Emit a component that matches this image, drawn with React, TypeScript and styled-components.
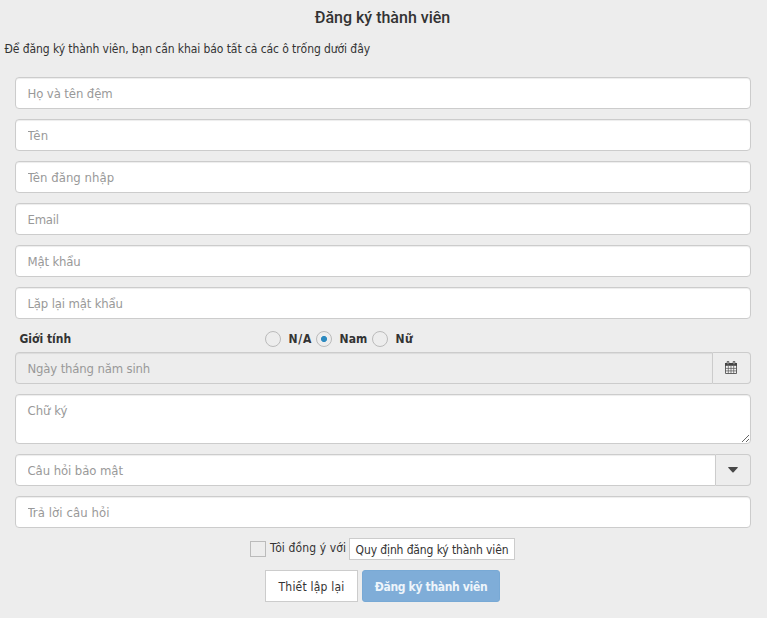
import React, { useState } from "react";
import styled, { createGlobalStyle, css } from "styled-components";

const GlobalStyle = createGlobalStyle`
  * { box-sizing: border-box; }
  html, body { margin: 0; padding: 0; background: #ededed; }
  body, input, textarea, button {
    font-family: Tahoma, "DejaVu Sans Condensed", "Noto Sans", sans-serif;
    font-size: 12px;
    color: #333;
  }
`;

const Page = styled.main`
  width: 767px;
  height: 618px;
  overflow: hidden;
  background: #ededed;
`;

const Title = styled.h2`
  margin: 0;
  padding: 8px 2px 0 0;
  font: 500 16px/20px Roboto, sans-serif;
  text-align: center;
  color: #333;
`;

const Intro = styled.p`
  margin: 11px 0 0 4.5px;
  line-height: 20px;
  white-space: nowrap;
  letter-spacing: -0.08px;
`;

const Form = styled.form`
  display: flex;
  flex-direction: column;
  gap: 10px;
  width: 736px;
  margin: 18px 0 0 15px;
`;

const fieldStyle = css<{ $spacing?: number }>`
  display: block;
  border: 1px solid #ccc;
  border-radius: 4px;
  background: #fff;
  padding: 5px 12px 5px 11.5px;
  font-size: 13px;
  line-height: 20px;
  letter-spacing: ${(p) => p.$spacing ?? 0}px;
  outline: none;
  box-shadow: inset 0 1px 1px rgba(0, 0, 0, 0.075);
  &::placeholder {
    color: #999;
    opacity: 1;
  }
`;

const Field = styled.input<{ $spacing?: number }>`
  ${fieldStyle}
  width: 100%;
  height: 32px;
`;

const Signature = styled.textarea`
  ${fieldStyle}
  width: 100%;
  height: 50px;
  padding-top: 6px;
  resize: vertical;
`;

const FieldGroup = styled.div`
  display: flex;
`;

const GroupField = styled(Field)`
  flex: 1;
  min-width: 0;
  border-radius: 4px 0 0 4px;
  &[readonly] {
    background: #ededed;
  }
`;

const Addon = styled.button<{ $width: number }>`
  width: ${(p) => p.$width}px;
  height: 32px;
  padding: 0 1px 1px 0;
  display: flex;
  align-items: center;
  justify-content: center;
  border: 1px solid #ccc;
  border-left: 0;
  border-radius: 0 4px 4px 0;
  background: #ededed;
`;

const GenderRow = styled.div`
  display: flex;
  align-items: center;
  height: 23px;
  margin: -2px 0 -8px;
  padding-left: 4.5px;
  font-weight: 700;
`;

const GenderLabel = styled.span`
  width: 245.5px;
  line-height: 20px;
`;

const RadioLabel = styled.label<{ $width: number; $spacing: number }>`
  display: flex;
  align-items: center;
  gap: 7.5px;
  width: ${(p) => p.$width}px;
  line-height: 20px;
  letter-spacing: ${(p) => p.$spacing}px;
  white-space: nowrap;
`;

const Radio = styled.input`
  appearance: none;
  flex: none;
  width: 16px;
  height: 16px;
  margin: 0;
  border: 1px solid #bbb;
  border-radius: 50%;
  background: #ededed;
  &:checked {
    background: radial-gradient(circle, #2d8ac0 0 2.7px, #ededed 3.4px);
  }
`;

const Agreement = styled.div`
  display: flex;
  height: 22px;
  padding-left: 235px;
`;

const Check = styled.input`
  appearance: none;
  width: 16px;
  height: 16px;
  margin: 3px 4px 0 0;
  border: 1px solid #bbb;
  background: #ededed;
`;

const AgreeText = styled.label`
  width: 79px;
  line-height: 20px;
  letter-spacing: 0.12px;
  white-space: nowrap;
`;

const PlainButton = styled.button<{ $width: number; $height: number; $spacing: number }>`
  width: ${(p) => p.$width}px;
  height: ${(p) => p.$height}px;
  padding: 1px 0 0;
  border: 1px solid #ccc;
  background: #fff;
  line-height: 20px;
  letter-spacing: ${(p) => p.$spacing}px;
  text-align: center;
  white-space: nowrap;
`;

const Actions = styled.div`
  display: flex;
  gap: 4px;
  padding-left: 250px;
`;

const SubmitButton = styled(PlainButton)`
  border-color: #78a9d5;
  border-radius: 3px;
  background: #7fadd8;
  color: #eef5fb;
  font-weight: 700;
`;

const CalendarIcon = () => (
  <svg width="12" height="13" viewBox="0 0 12 13">
    <path d="M.5 2.5h11v10H.5z" fill="#f4f4f4" stroke="#555" strokeWidth=".9" />
    <path d="M.5 7.4h11M.5 9.9h11M3.3 5v7.5M6 5v7.5M8.7 5v7.5" fill="none" stroke="#555" strokeWidth=".7" />
    <path d="M0 2h12v2.8H0z" fill="#444" />
    <path d="M2.2.5h1.6v2.8H2.2zM8.2.5h1.6v2.8H8.2z" fill="#ededed" stroke="#444" strokeWidth=".8" />
  </svg>
);

const CaretIcon = () => (
  <svg width="10" height="6" viewBox="0 0 10 6">
    <path d="M.3 0h9.4v.8L5.6 5.2q-.6.6-1.2 0L.3.8z" fill="#484848" />
  </svg>
);

const fields = [
  { label: "Họ và tên đệm", type: "text", spacing: -0.1 },
  { label: "Tên", type: "text", spacing: 0.4 },
  { label: "Tên đăng nhập", type: "text", spacing: 0.03 },
  { label: "Email", type: "email", spacing: -0.25 },
  { label: "Mật khẩu", type: "password", spacing: -0.15 },
  { label: "Lặp lại mật khẩu", type: "password", spacing: -0.16 },
];

const genders = [
  { label: "N/A", width: 51, spacing: 0.7 },
  { label: "Nam", width: 56, spacing: 0.1 },
  { label: "Nữ", width: 45, spacing: 0.4 },
];

export default function App() {
  const [gender, setGender] = useState("Nam");
  return (
    <>
      <GlobalStyle />
      <Page>
        <Title>Đăng ký thành viên</Title>
        <Intro>Để đăng ký thành viên, bạn cần khai báo tất cả các ô trống dưới đây</Intro>
        <Form onSubmit={(e) => e.preventDefault()}>
          {fields.map((f) => (
            <Field key={f.label} type={f.type} placeholder={f.label} $spacing={f.spacing} />
          ))}
          <GenderRow>
            <GenderLabel>Giới tính</GenderLabel>
            {genders.map((g) => (
              <RadioLabel key={g.label} $width={g.width} $spacing={g.spacing}>
                <Radio type="radio" name="gender" checked={gender === g.label} onChange={() => setGender(g.label)} />
                {g.label}
              </RadioLabel>
            ))}
          </GenderRow>
          <FieldGroup>
            <GroupField placeholder="Ngày tháng năm sinh" readOnly $spacing={-0.16} />
            <Addon type="button" $width={38} aria-label="Ngày tháng năm sinh"><CalendarIcon /></Addon>
          </FieldGroup>
          <Signature placeholder="Chữ ký" />
          <FieldGroup>
            <GroupField placeholder="Câu hỏi bảo mật" $spacing={-0.08} />
            <Addon type="button" $width={35} aria-label="Câu hỏi bảo mật"><CaretIcon /></Addon>
          </FieldGroup>
          <Field placeholder="Trả lời câu hỏi" $spacing={0.08} />
          <Agreement>
            <Check type="checkbox" id="agree" />
            <AgreeText htmlFor="agree">Tôi đồng ý với</AgreeText>
            <PlainButton type="button" $width={166} $height={22} $spacing={-0.12}>Quy định đăng ký thành viên</PlainButton>
          </Agreement>
          <Actions>
            <PlainButton type="reset" $width={93} $height={32} $spacing={0.2}>Thiết lập lại</PlainButton>
            <SubmitButton type="submit" $width={138} $height={32} $spacing={-0.33}>Đăng ký thành viên</SubmitButton>
          </Actions>
        </Form>
      </Page>
    </>
  );
}
